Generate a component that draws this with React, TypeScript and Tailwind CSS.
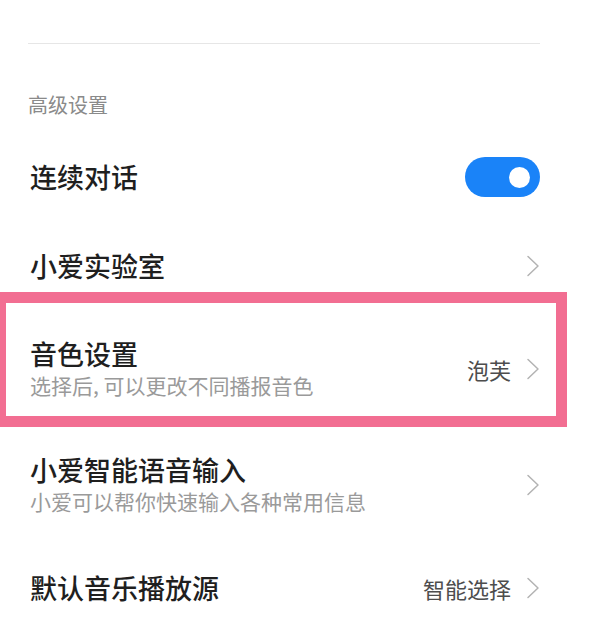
import type { ReactNode } from "react"

const cjk = { fontFamily: '"Noto Sans CJK SC", "Noto Sans", sans-serif' }

function Chevron() {
  return (
    <svg width="14" height="22" viewBox="0 0 14 22" className="shrink-0">
      <path d="M2 1.5 L12 11 L2 20.5" fill="none" stroke="#b3b3b3" strokeWidth="1.5" strokeLinejoin="round" strokeLinecap="round" />
    </svg>
  )
}

function Toggle({ on }: { on: boolean }) {
  return (
    <div className={`flex h-[40px] w-[75px] items-center rounded-full px-[10px] ${on ? "justify-end bg-[#1a83f8]" : "justify-start bg-[#e2e2e2]"}`}>
      <div className="h-[21px] w-[21px] rounded-full bg-white" />
    </div>
  )
}

interface RowProps {
  title: string
  subtitle?: string
  value?: string
  right?: ReactNode
  height: string
}

function Row({ title, subtitle, value, right, height }: RowProps) {
  return (
    <div className={`flex items-center justify-between ${height}`}>
      <div className="flex flex-col">
        <span className="text-[27px] font-medium leading-[30px] text-[#1f1f1f]">{title}</span>
        {subtitle && <span className="mt-[2px] text-[21px] leading-[28px] text-[#9a9a9a]">{subtitle}</span>}
      </div>
      {right ?? (
        <div className="flex items-center gap-[15px]">
          {value && <span className="text-[22px] leading-[28px] text-[#4d4d4d]">{value}</span>}
          <Chevron />
        </div>
      )}
    </div>
  )
}

export default function App() {
  return (
    <div className="relative h-[637px] w-[590px] overflow-hidden bg-white" style={cjk}>
      <div className="pl-[28px] pr-[50px] pt-[43px]">
        <div className="h-px bg-[#e6e6e6]" />
        <div className="h-[89px] pt-[50px]">
          <span className="text-[20px] leading-[20px] text-[#8a8a8a]">高级设置</span>
        </div>
        <div className="pl-[2px]">
          <Row title="连续对话" height="h-[88px]" right={<Toggle on />} />
          <Row title="小爱实验室" height="h-[90px]" />
          <Row title="音色设置" subtitle="选择后, 可以更改不同播报音色" value="泡芙" height="h-[116px]" />
          <Row title="小爱智能语音输入" subtitle="小爱可以帮你快速输入各种常用信息" height="h-[116px]" />
          <Row title="默认音乐播放源" value="智能选择" height="h-[90px]" />
        </div>
      </div>

      {/* highlight frame around the voice setting row */}
      <div className="absolute left-[-5px] top-[292px] h-[135px] w-[572px] border-[11px] border-[#f26e92]" />
    </div>
  )
}
